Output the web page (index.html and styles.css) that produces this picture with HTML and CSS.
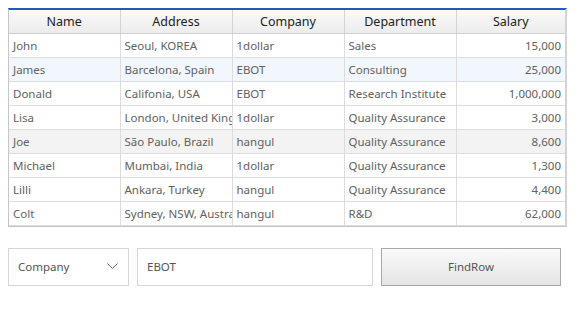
FILE: index.html
```html
<!DOCTYPE html>
<html lang="en">
<head>
    <meta charset="UTF-8">
    <title>FindRow</title>
    <link rel="stylesheet" href="styles.css">
</head>
<body>
    <div class="grid">
        <table>
            <colgroup>
                <col class="col-first">
                <col class="col">
                <col class="col">
                <col class="col">
                <col class="col-last">
            </colgroup>
            <thead>
                <tr>
                    <th>Name</th>
                    <th>Address</th>
                    <th>Company</th>
                    <th>Department</th>
                    <th>Salary</th>
                </tr>
            </thead>
            <tbody>
                <tr><td>John</td><td>Seoul, KOREA</td><td>1dollar</td><td>Sales</td><td class="num">15,000</td></tr>
                <tr class="found"><td>James</td><td>Barcelona, Spain</td><td>EBOT</td><td>Consulting</td><td class="num">25,000</td></tr>
                <tr><td>Donald</td><td>Califonia, USA</td><td>EBOT</td><td>Research Institute</td><td class="num">1,000,000</td></tr>
                <tr><td>Lisa</td><td>London, United Kingdom</td><td>1dollar</td><td>Quality Assurance</td><td class="num">3,000</td></tr>
                <tr class="hover"><td>Joe</td><td>São Paulo, Brazil</td><td>hangul</td><td>Quality Assurance</td><td class="num">8,600</td></tr>
                <tr><td>Michael</td><td>Mumbai, India</td><td>1dollar</td><td>Quality Assurance</td><td class="num">1,300</td></tr>
                <tr><td>Lilli</td><td>Ankara, Turkey</td><td>hangul</td><td>Quality Assurance</td><td class="num">4,400</td></tr>
                <tr><td>Colt</td><td>Sydney, NSW, Australia</td><td>hangul</td><td>R&amp;D</td><td class="num">62,000</td></tr>
            </tbody>
        </table>
    </div>

    <div class="search">
        <div class="select">
            <span>Company</span>
            <svg width="11" height="7" viewBox="0 0 11 7"><path d="M0.5 0.5 L5.5 5.5 L10.5 0.5" fill="none" stroke="#666" stroke-width="1"/></svg>
        </div>
        <div class="field">EBOT</div>
        <button type="button">FindRow</button>
    </div>
</body>
</html>
```

FILE: styles.css
```css
* {
    margin: 0;
    padding: 0;
    box-sizing: border-box;
}

body {
    font-family: 'Noto Sans', sans-serif;
    font-size: 11.5px;
    color: #616161;
    background: #fff;
    padding: 8px;
}

.grid {
    width: 559px;
    border: 1px solid #c6c6c6;
    border-top: 2px solid #1e5cb3;
    border-right: 2px solid #d4d4d4;
    overflow: hidden;
}

table {
    width: 556px;
    table-layout: fixed;
    border-collapse: collapse;
}

.col-first {
    width: 111px;
}

.col {
    width: 112px;
}

.col-last {
    width: 109px;
}

th, td {
    height: 24px;
    padding: 0 4px;
    white-space: nowrap;
    overflow: hidden;
    text-overflow: clip;
    border-right: 1px solid #dcdcdc;
    border-bottom: 1px solid #dcdcdc;
}

th:last-child, td:last-child {
    border-right: none;
}

th {
    height: 23px;
    font-weight: normal;
    font-size: 12.5px;
    color: #222;
    background: linear-gradient(#fafafa, #ececec);
    border-right-color: #d4d4d4;
    border-bottom-color: #cfcfcf;
}

td {
    text-align: left;
}

td.num {
    text-align: right;
}

tr.found td {
    background: #f1f7fd;
}

tr.hover td {
    background: #f3f3f3;
}

.search {
    display: flex;
    gap: 8px;
    margin-top: 21px;
}

.select, .field {
    height: 38px;
    border: 1px solid #d6d6d6;
    display: flex;
    align-items: center;
    color: #555;
}

.select {
    width: 121px;
    padding: 0 10px 0 9px;
    justify-content: space-between;
}

.field {
    width: 236px;
    padding: 0 9px;
}

button {
    width: 180px;
    height: 38px;
    font-family: inherit;
    font-size: 11.5px;
    color: #555;
    border: 1px solid #a8a8a8;
    background: linear-gradient(#fafafa, #e4e4e4);
}
```
